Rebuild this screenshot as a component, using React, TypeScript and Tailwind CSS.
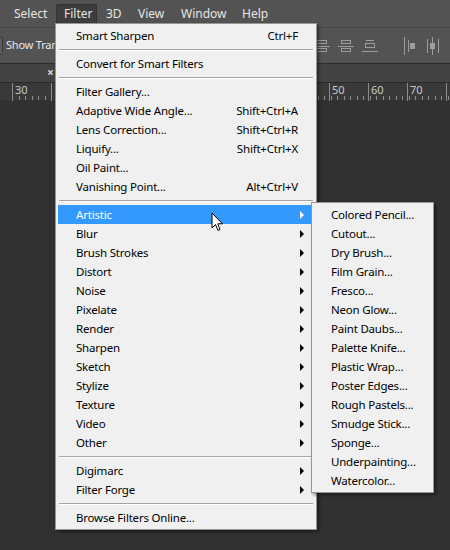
import React from "react";

type Entry =
  | { kind: "item"; label: string; shortcut?: string; sub?: boolean; active?: boolean }
  | { kind: "sep" };

const menu: Entry[] = [
  { kind: "item", label: "Smart Sharpen", shortcut: "Ctrl+F" },
  { kind: "sep" },
  { kind: "item", label: "Convert for Smart Filters" },
  { kind: "sep" },
  { kind: "item", label: "Filter Gallery..." },
  { kind: "item", label: "Adaptive Wide Angle...", shortcut: "Shift+Ctrl+A" },
  { kind: "item", label: "Lens Correction...", shortcut: "Shift+Ctrl+R" },
  { kind: "item", label: "Liquify...", shortcut: "Shift+Ctrl+X" },
  { kind: "item", label: "Oil Paint..." },
  { kind: "item", label: "Vanishing Point...", shortcut: "Alt+Ctrl+V" },
  { kind: "sep" },
  { kind: "item", label: "Artistic", sub: true, active: true },
  { kind: "item", label: "Blur", sub: true },
  { kind: "item", label: "Brush Strokes", sub: true },
  { kind: "item", label: "Distort", sub: true },
  { kind: "item", label: "Noise", sub: true },
  { kind: "item", label: "Pixelate", sub: true },
  { kind: "item", label: "Render", sub: true },
  { kind: "item", label: "Sharpen", sub: true },
  { kind: "item", label: "Sketch", sub: true },
  { kind: "item", label: "Stylize", sub: true },
  { kind: "item", label: "Texture", sub: true },
  { kind: "item", label: "Video", sub: true },
  { kind: "item", label: "Other", sub: true },
  { kind: "sep" },
  { kind: "item", label: "Digimarc", sub: true },
  { kind: "item", label: "Filter Forge", sub: true },
  { kind: "sep" },
  { kind: "item", label: "Browse Filters Online..." },
];

const artistic = [
  "Colored Pencil...",
  "Cutout...",
  "Dry Brush...",
  "Film Grain...",
  "Fresco...",
  "Neon Glow...",
  "Paint Daubs...",
  "Palette Knife...",
  "Plastic Wrap...",
  "Poster Edges...",
  "Rough Pastels...",
  "Smudge Stick...",
  "Sponge...",
  "Underpainting...",
  "Watercolor...",
];

const menuBar = [
  { label: "Select", w: "w-[49px]", ml: "ml-[7px]" },
  { label: "Filter", w: "w-[41px]", ml: "ml-0", open: true },
  { label: "3D", w: "w-[30px]", ml: "ml-[2px]" },
  { label: "View", w: "w-[40px]", ml: "ml-[2px]" },
  { label: "Window", w: "w-[58px]", ml: "ml-[3px]" },
  { label: "Help", w: "w-[40px]", ml: "ml-[3px]" },
];

function Arrow({ white }: { white?: boolean }) {
  return (
    <svg width="5" height="8" viewBox="0 0 5 8" className="absolute right-[9px] top-[6px]">
      <polygon points="0,0 4,4 0,8" fill={white ? "#ffffff" : "#000000"} />
    </svg>
  );
}

function Separator() {
  return (
    <div className="h-[9px] flex flex-col justify-center px-[1px]">
      <div className="h-px bg-[#a5a5a5]" />
      <div className="h-px bg-white" />
    </div>
  );
}

function Ruler() {
  const majors = [12, 51, 329, 368, 407, 446];
  const minors: number[] = [];
  for (let x = 12; x < 450; x += 6.5) minors.push(Math.round(x));
  return (
    <div className="relative h-[18px] bg-[#393939] border-t border-[#2a2a2a]">
      <svg width="450" height="18" className="absolute left-0 top-0">
        {minors.map((x) => (
          <line key={x} x1={x + 0.5} x2={x + 0.5} y1={13} y2={17} stroke="#8c8c8c" strokeWidth="1" />
        ))}
        {majors.map((x) => (
          <line key={"m" + x} x1={x + 0.5} x2={x + 0.5} y1={0} y2={18} stroke="#8c8c8c" strokeWidth="1" />
        ))}
      </svg>
      <span className="absolute left-[15px] top-[1px] text-[11px] leading-[12px] text-[#c8c8c8]">30</span>
      <span className="absolute left-[332px] top-[1px] text-[11px] leading-[12px] text-[#c8c8c8]">50</span>
      <span className="absolute left-[371px] top-[1px] text-[11px] leading-[12px] text-[#c8c8c8]">60</span>
      <span className="absolute left-[410px] top-[1px] text-[11px] leading-[12px] text-[#c8c8c8]">70</span>
    </div>
  );
}

function AlignIcons() {
  const c = "#9c9c9c";
  return (
    <div className="absolute left-[316px] top-[9px] flex items-center gap-[8px]">
      <svg width="14" height="16" viewBox="0 0 14 16">
        <rect x="0.5" y="2.5" width="10" height="3" fill="none" stroke={c} />
        <line x1="0" x2="14" y1="8.5" y2="8.5" stroke={c} />
        <rect x="0.5" y="10.5" width="10" height="3" fill="none" stroke={c} />
      </svg>
      <svg width="16" height="16" viewBox="0 0 16 16">
        <rect x="3.5" y="2.5" width="9" height="3" fill="none" stroke={c} />
        <line x1="0" x2="16" y1="8.5" y2="8.5" stroke={c} />
        <rect x="3.5" y="10.5" width="9" height="3" fill="none" stroke={c} />
      </svg>
      <svg width="16" height="16" viewBox="0 0 16 16">
        <line x1="4" x2="12" y1="2.5" y2="2.5" stroke={c} />
        <rect x="3.5" y="5.5" width="9" height="4" fill="none" stroke={c} />
        <line x1="0" x2="16" y1="13.5" y2="13.5" stroke={c} />
      </svg>
      <div className="w-[9px]" />
      <svg width="14" height="18" viewBox="0 0 14 18">
        <line x1="1.5" x2="1.5" y1="0" y2="18" stroke={c} />
        <line x1="5.5" x2="5.5" y1="3" y2="15" stroke={c} />
        <rect x="7" y="6" width="5" height="6" fill={c} />
      </svg>
      <svg width="16" height="18" viewBox="0 0 16 18">
        <line x1="2.5" x2="2.5" y1="2" y2="16" stroke={c} />
        <line x1="7.5" x2="7.5" y1="0" y2="18" stroke={c} />
        <rect x="5" y="6" width="5" height="6" fill={c} />
        <line x1="13.5" x2="13.5" y1="2" y2="16" stroke={c} />
      </svg>
      <svg width="10" height="18" viewBox="0 0 10 18">
        <line x1="1.5" x2="1.5" y1="0" y2="18" stroke={c} />
        <rect x="3" y="6" width="5" height="6" fill={c} />
      </svg>
    </div>
  );
}

export default function App() {
  const font = "font-['Noto_Sans','Open_Sans','Liberation_Sans',sans-serif]";
  return (
    <div className={`relative w-[450px] h-[550px] overflow-hidden bg-[#313131] ${font}`}>
      {/* menu bar */}
      <div className="h-[27px] bg-[#535353] flex items-start pt-[4px] text-[12px] text-[#e6e6e6]">
        {menuBar.map((m) => (
          <div
            key={m.label}
            className={`${m.w} ${m.ml} h-[19px] pl-[7px] flex items-center leading-none ${
              m.open ? "bg-[#3d3d3d] rounded-t-[2px] border border-b-0 border-[#333333] pl-[6px]" : ""
            }`}
          >
            {m.label}
          </div>
        ))}
      </div>

      {/* options bar */}
      <div className="relative h-[36px] bg-[#535353] border-t border-[#474747] flex items-center">
        <div className="w-[3px] h-[18px] border border-l-0 border-[#3a3a3a] bg-[#5c5c5c] rounded-r-[2px]" />
        <span className="ml-[3px] text-[11px] tracking-[-0.2px] text-[#e8e8e8] whitespace-nowrap">Show Trans</span>
        <AlignIcons />
      </div>

      {/* document tab bar */}
      <div className="h-[19px] bg-[#434343] border-t border-[#2c2c2c] flex items-center">
        <span className="ml-[47px] text-[12px] leading-none font-bold text-[#d8d8d8]">×</span>
      </div>

      <Ruler />

      {/* Filter menu */}
      <div className="absolute left-[55px] top-[23px] w-[262px] bg-[#f0f0f0] border border-[#979797] p-[2px] shadow-[2px_2px_3px_rgba(0,0,0,0.45)] text-[11.5px] tracking-[-0.2px] text-black">
        {menu.map((e, i) =>
          e.kind === "sep" ? (
            <Separator key={i} />
          ) : (
            <div
              key={i}
              className={`relative h-[19px] flex items-center pl-[18px] pr-[16px] whitespace-nowrap ${
                e.active ? "bg-[#3399ff] text-white" : ""
              }`}
            >
              <span className="flex-1">{e.label}</span>
              {e.shortcut ? <span>{e.shortcut}</span> : null}
              {e.sub ? <Arrow white={e.active} /> : null}
            </div>
          )
        )}
      </div>

      {/* Artistic submenu */}
      <div className="absolute left-[311px] top-[202px] w-[123px] bg-[#f0f0f0] border border-[#979797] py-[2px] shadow-[2px_2px_3px_rgba(0,0,0,0.45)] text-[11.5px] tracking-[-0.2px] text-black">
        {artistic.map((a) => (
          <div key={a} className="h-[19px] flex items-center pl-[19px] whitespace-nowrap">
            {a}
          </div>
        ))}
      </div>

      {/* mouse pointer */}
      <svg width="13" height="21" viewBox="0 0 13 21" className="absolute left-[211px] top-[212px]">
        <polygon
          points="1,1 1,16 4.5,12.5 7,18.5 9,17.5 6.8,11.8 11.5,11.8"
          fill="#ffffff"
          stroke="#000000"
          strokeWidth="1"
          strokeLinejoin="miter"
        />
      </svg>
    </div>
  );
}
